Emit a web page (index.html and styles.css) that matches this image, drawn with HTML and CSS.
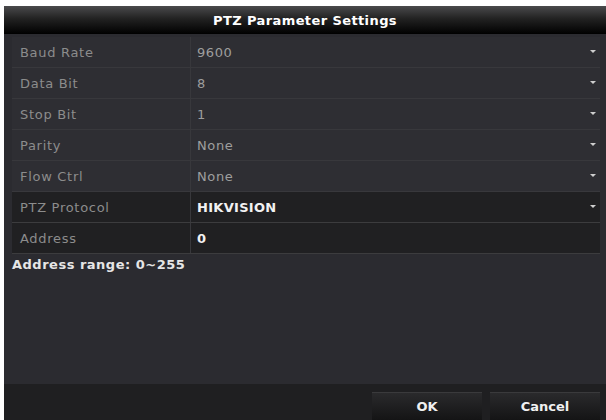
FILE: index.html
```html
<!DOCTYPE html>
<html>
<head>
<meta charset="utf-8">
<link rel="stylesheet" href="styles.css">
</head>
<body>
<div class="dialog">
  <div class="title">PTZ Parameter Settings</div>
  <div class="content">
    <div class="rows">
      <div class="row"><div class="label">Baud Rate</div><div class="value">9600<span class="arrow"></span></div></div>
      <div class="row"><div class="label">Data Bit</div><div class="value">8<span class="arrow"></span></div></div>
      <div class="row"><div class="label">Stop Bit</div><div class="value">1<span class="arrow"></span></div></div>
      <div class="row"><div class="label">Parity</div><div class="value">None<span class="arrow"></span></div></div>
      <div class="row"><div class="label">Flow Ctrl</div><div class="value">None<span class="arrow"></span></div></div>
      <div class="row dark"><div class="label">PTZ Protocol</div><div class="value strong">HIKVISION<span class="arrow"></span></div></div>
      <div class="row dark"><div class="label">Address</div><div class="value strong">0</div></div>
    </div>
    <div class="hint">Address range: 0~255</div>
  </div>
  <div class="footer">
    <button class="btn">OK</button>
    <button class="btn">Cancel</button>
  </div>
</div>
</body>
</html>
```

FILE: styles.css
```css
html, body {
  margin: 0;
  padding: 0;
  background: #ffffff;
}
body {
  padding: 6px 0 0 4px;
  font-family: "DejaVu Sans", Verdana, sans-serif;
}
.dialog {
  width: 602px;
  height: 414px;
  background: #2b2b30;
  display: flex;
  flex-direction: column;
}
.title {
  height: 28px;
  background: linear-gradient(#4a4a4c 0%, #222 45%, #000 100%);
  color: #ffffff;
  font-weight: bold;
  font-size: 13px;
  display: flex;
  align-items: center;
  justify-content: center;
  letter-spacing: 0.4px;
}
.content {
  flex: 1;
  padding: 3px 6px 0 8px;
}
.rows {
  display: flex;
  flex-direction: column;
}
.row {
  height: 30px;
  display: flex;
  border-bottom: 1px solid #38383c;
  background: #2e2e33;
}
.row.dark {
  background: #202022;
  border-bottom: 1px solid #3c3c3e;
}
.label {
  width: 170px;
  padding-left: 8px;
  color: #8c8c8c;
  font-size: 13px;
  letter-spacing: 0.7px;
  display: flex;
  align-items: center;
  border-right: 1px solid #38383c;
}
.value {
  flex: 1;
  padding-left: 6px;
  color: #9e9e9e;
  font-size: 13px;
  letter-spacing: 0.6px;
  display: flex;
  align-items: center;
  position: relative;
}
.value.strong {
  color: #f2f2f2;
  font-weight: bold;
  letter-spacing: 0.3px;
}
.arrow {
  position: absolute;
  right: 4px;
  top: 13px;
  width: 0;
  height: 0;
  border-left: 3px solid transparent;
  border-right: 3px solid transparent;
  border-top: 3px solid #cfcfcf;
}
.hint {
  color: #e6e6e6;
  font-weight: bold;
  font-size: 13px;
  letter-spacing: 0.5px;
  padding: 3px 0 0 0;
  margin-left: 0;
}
.footer {
  height: 36px;
  background: #1f1f21;
  display: flex;
  justify-content: flex-end;
  align-items: flex-end;
  gap: 8px;
  padding-right: 6px;
}
.btn {
  width: 110px;
  height: 28px;
  border: none;
  border-top: 1px solid #3a3a3c;
  background: linear-gradient(#2a2a2c, #141415);
  color: #f0f0f0;
  font-family: "DejaVu Sans", Verdana, sans-serif;
  font-weight: bold;
  font-size: 13px;
  padding: 0;
}
```
